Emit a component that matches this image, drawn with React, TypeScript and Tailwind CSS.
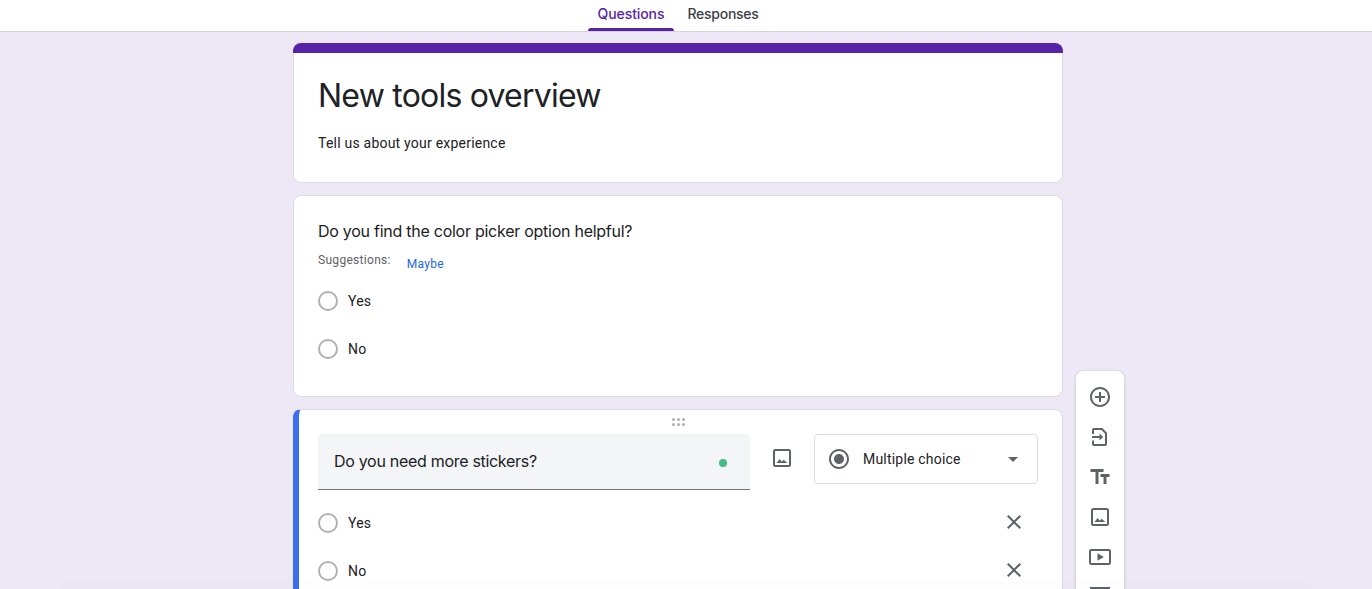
import { MdAddCircleOutline, MdArrowDropDown, MdClose, MdRadioButtonChecked, MdTextFields } from 'react-icons/md';

const bodyFont = "font-['Roboto',sans-serif]";
const titleFont = "font-['Inter',sans-serif]";

function ImageIcon({ className }: { className?: string }) {
  return (
    <svg viewBox="0 0 24 24" className={className} fill="none">
      <rect x="4" y="4" width="16" height="16" rx="1.200" stroke="currentColor" strokeWidth="2" />
      <path d="M6.500 17l3.200-3.900 2.200 2.600 1.700-2 3.900 3.300z" fill="currentColor" />
    </svg>
  );
}

function ImportIcon({ className }: { className?: string }) {
  return (
    <svg viewBox="0 0 24 24" className={className} fill="none">
      <path
        d="M5 9V4.900c0-.5.400-.9.900-.9h8l4.100 4.200v10.900c0 .5-.4.900-.9.900H5.900c-.5 0-.9-.4-.9-.9V15.500"
        stroke="currentColor"
        strokeWidth="2"
      />
      <path d="M4 11.100h7.500V8.600l3.700 3.500-3.700 3.500v-2.600H4z" fill="currentColor" />
    </svg>
  );
}

function VideoIcon({ className }: { className?: string }) {
  return (
    <svg viewBox="0 0 24 24" className={className} fill="none">
      <rect x="2" y="5" width="20" height="14" rx="1.200" stroke="currentColor" strokeWidth="2" />
      <path d="M9.500 8.300v7.500l6.300-3.750z" fill="currentColor" />
    </svg>
  );
}

function Radio() {
  return <span className="block h-5 w-5 shrink-0 rounded-full border-2 border-[#b1b1b1]" />;
}

function Option({ label }: { label: string }) {
  return (
    <div className="flex h-12 items-center gap-[10px]">
      <Radio />
      <span className="text-[14px] tracking-[0.2px] text-[#202124]">{label}</span>
    </div>
  );
}

function EditOption({ label }: { label: string }) {
  return (
    <div className="flex h-12 items-center justify-between">
      <Option label={label} />
      <MdClose className="mb-[2px] mr-3 h-6 w-6 text-[#5f6368]" />
    </div>
  );
}

export default function App() {
  return (
    <div className={`relative h-[589px] overflow-hidden bg-[#ede7f6] ${bodyFont}`}>
      <header className="flex h-8 justify-center border-b border-[#d6d3dc] bg-white pr-3">
        <div className={`flex items-stretch text-[14px] font-medium ${titleFont}`}>
          <div className="relative flex w-[86px] items-center justify-center pb-[5px] tracking-[-0.1px] text-[#5623a8]">
            Questions
            <span className="absolute bottom-0 left-0 h-[3px] w-full rounded-t-[3px] bg-[#5623a8]" />
          </div>
          <div className="flex w-[98px] items-center justify-center pb-[5px] tracking-[-0.25px] text-[#3c4043]">
            Responses
          </div>
        </div>
      </header>

      <div className="ml-[293px] mt-[11px] flex items-start gap-3">
        <main className="flex w-[770px] shrink-0 flex-col gap-3">
          <section className="h-[140px] overflow-hidden rounded-lg">
            <div className="h-[10px] bg-[#5623a8]" />
            <div className="h-[130px] overflow-hidden rounded-b-lg border border-t-0 border-[#dadce0] bg-white">
              <h1 className={`ml-6 mt-[23px] text-[32px] leading-[40px] tracking-[-0.78px] text-[#202124] ${titleFont}`}>
                New tools overview
              </h1>
              <p className="ml-6 mt-[17px] text-[14px] leading-5 tracking-[0.22px] text-[#202124]">
                Tell us about your experience
              </p>
            </div>
          </section>

          <section className="h-[202px] rounded-lg border border-[#dadce0] bg-white px-6 pt-[23px]">
            <h2 className={`text-[16px] leading-6 tracking-[-0.26px] text-[#202124] ${titleFont}`}>
              Do you find the color picker option helpful?
            </h2>
            <div className="mt-[9px] flex items-start">
              <span className="text-[12px] leading-4 tracking-[0.3px] text-[#5f6368]">Suggestions:</span>
              <span className="ml-4 mt-1 text-[12px] leading-4 tracking-[0.3px] text-[#1a66e8]">Maybe</span>
            </div>
            <div className="mt-[5px]">
              <Option label="Yes" />
              <Option label="No" />
            </div>
          </section>

          <section className="h-[260px] overflow-hidden rounded-lg border border-l-[6px] border-[#dadce0] border-l-[#3b6ff0] bg-white pl-[19px] pr-6">
            <div className="flex h-6 items-center justify-center">
              <div className="grid grid-cols-3 gap-x-[2px] gap-y-[2px]">
                {[0, 1, 2, 3, 4, 5].map((n) => (
                  <span key={n} className="h-[3px] w-[3px] rounded-full bg-[#b0b0b0]" />
                ))}
              </div>
            </div>
            <div className="flex items-start">
              <div className="flex h-14 w-[432px] items-center justify-between rounded-t border-b border-[#70757a] bg-[#f4f5f7] pl-4 pr-[23px]">
                <span className={`mb-[2px] text-[16px] tracking-[-0.3px] text-[#202124] ${titleFont}`}>
                  Do you need more stickers?
                </span>
                <span className="mt-[2px] h-2 w-2 rounded-full bg-[#42bd84]" />
              </div>
              <ImageIcon className="ml-5 mt-[12px] h-6 w-6 text-[#5f6368]" />
              <div className="ml-5 flex h-[50px] w-[224px] items-center rounded border border-[#dadce0] pl-3 pr-3">
                <MdRadioButtonChecked className="h-6 w-6 text-[#5f6368]" />
                <span className="ml-3 text-[14px] tracking-[0.2px] text-[#202124]">Multiple choice</span>
                <MdArrowDropDown className="ml-auto h-6 w-6 text-[#5f6368]" />
              </div>
            </div>
            <div className="mt-[9px]">
              <EditOption label="Yes" />
              <EditOption label="No" />
            </div>
          </section>
        </main>

        <aside className="mt-[327px] flex h-[300px] w-[50px] shrink-0 flex-col items-center gap-4 rounded-lg border border-[#dadce0] bg-white pt-[14px] text-[#5f6368] shadow-sm">
          <MdAddCircleOutline className="h-6 w-6" />
          <ImportIcon className="h-6 w-6" />
          <MdTextFields className="h-6 w-6" />
          <ImageIcon className="h-6 w-6" />
          <VideoIcon className="h-6 w-6" />
          <span className="mt-[2px] h-[2px] w-5 shrink-0 bg-[#5f6368]" />
        </aside>
      </div>

      {/* faint shadow along the bottom of the window */}
      <div className="pointer-events-none absolute bottom-0 left-[60px] right-[60px] h-[6px] bg-black/[0.012] blur-[2px]" />
    </div>
  );
}
